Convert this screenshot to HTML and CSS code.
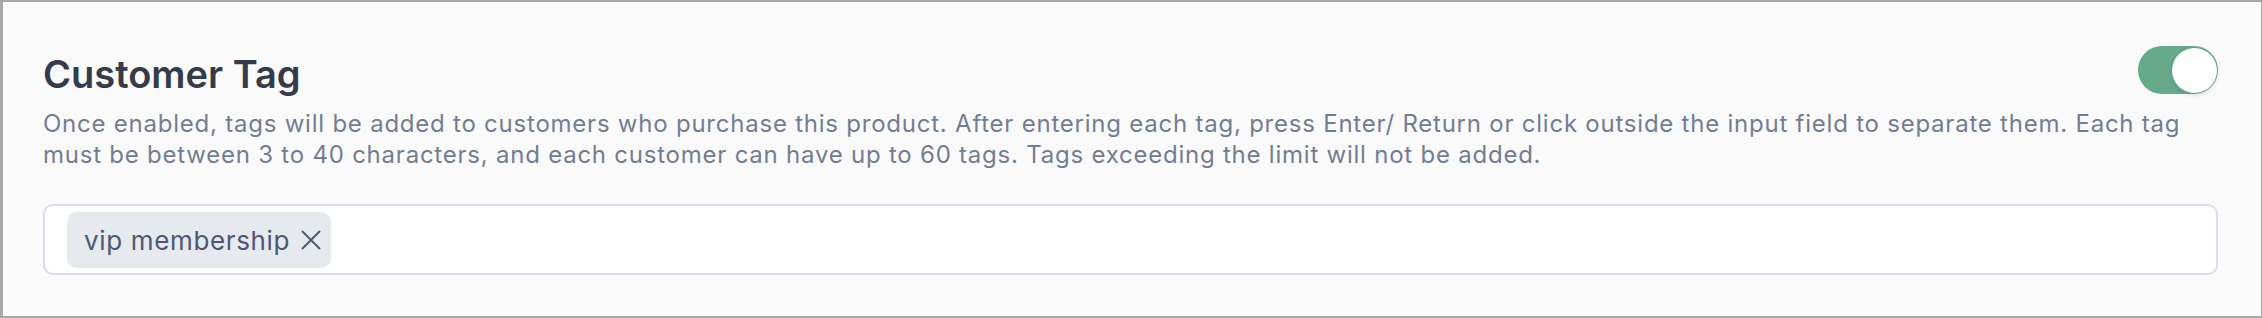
FILE: index.html
```html
<!DOCTYPE html>
<html lang="en">
<head>
<meta charset="utf-8">
<title>Customer Tag</title>
<link rel="stylesheet" href="styles.css">
</head>
<body>
<section class="frame">
  <div class="header">
    <h2 class="title">Customer Tag</h2>
    <button class="switch" role="switch" aria-checked="true" aria-label="Enable customer tag"><span class="knob"></span></button>
  </div>
  <p class="desc">Once enabled, tags will be added to customers who purchase this product. After entering each tag, press Enter/ Return or click outside the input field to separate them. Each tag must be between 3 to 40 characters, and each customer can have up to 60 tags. Tags exceeding the limit will not be added.</p>
  <div class="tag-input">
    <span class="tag">
      <span class="tag-text">vip membership</span>
      <svg class="tag-x" width="20" height="20" viewBox="0 0 20 20" aria-hidden="true"><path d="M1.5 1.5L18.5 18.5M18.5 1.5L1.5 18.5" fill="none" stroke="currentColor" stroke-width="2" stroke-linecap="round"/></svg>
    </span>
  </div>
</section>
</body>
</html>
```
FILE: styles.css
```css
html, body {
  margin: 0;
  padding: 0;
}
body {
  font-family: Inter, "Noto Sans", sans-serif;
  background: #fafafa;
}
.frame {
  box-sizing: border-box;
  height: 318px;
  border-style: solid;
  border-color: #a8a8a8;
  border-width: 2px 1px 2px 3px;
  background: #fafafa;
  padding: 44px 43px 0 40px;
}
.header {
  display: flex;
  justify-content: space-between;
  align-items: flex-start;
}
.title {
  margin: 5px 0 0;
  font-size: 38px;
  line-height: 46px;
  font-weight: 600;
  color: #353b4a;
}
.switch {
  box-sizing: border-box;
  width: 80px;
  height: 48px;
  border: none;
  border-radius: 24px;
  background: #66a98b;
  padding: 0 1.5px;
  display: flex;
  align-items: center;
  justify-content: flex-end;
  cursor: pointer;
}
.knob {
  width: 45px;
  height: 45px;
  border-radius: 50%;
  background: #fff;
  box-shadow: 0 2px 5px rgba(0, 0, 0, 0.12);
}
.desc {
  margin: 12px 0 0;
  font-size: 24px;
  line-height: 30.6px;
  letter-spacing: 0.77px;
  color: #737d92;
}
.tag-input {
  margin-top: 34px;
  box-sizing: border-box;
  height: 71px;
  border: 2px solid #d7e0ea;
  border-radius: 10px;
  background: #fff;
  padding: 0 22px;
  display: flex;
  align-items: center;
}
.tag {
  box-sizing: border-box;
  height: 56px;
  border-radius: 10px;
  background: #e6e9ee;
  padding: 1px 10px 0 17px;
  display: inline-flex;
  align-items: center;
  gap: 11px;
  color: #4e5875;
}
.tag-text {
  font-size: 26px;
  letter-spacing: 0.65px;
}
.tag-x {
  width: 20px;
  height: 20px;
  margin-top: -1px;
}
```
